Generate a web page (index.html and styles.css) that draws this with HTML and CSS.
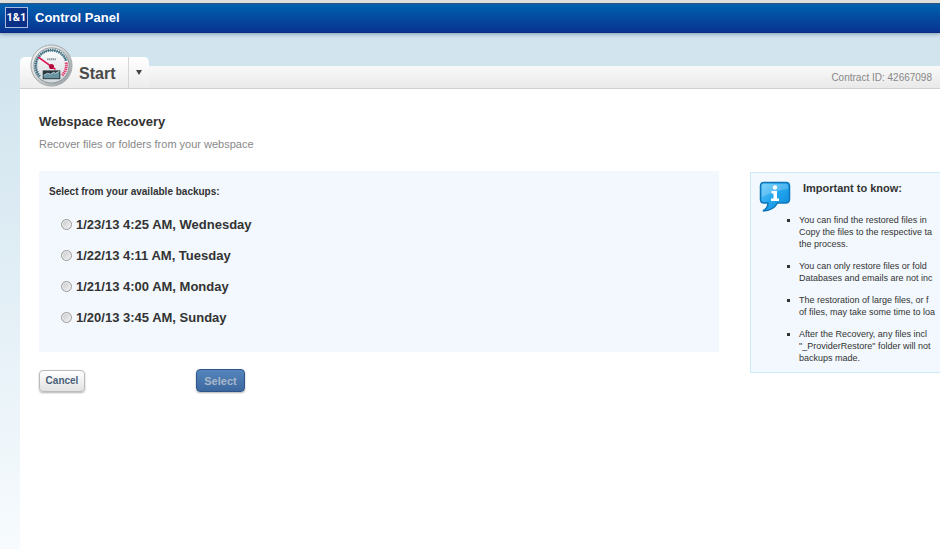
FILE: index.html
```html
<!DOCTYPE html>
<html lang="en">
<head>
    <meta charset="utf-8">
    <title>1&amp;1 Control Panel - Webspace Recovery</title>
    <meta name="viewport" content="width=device-width, initial-scale=1.0">
    <link rel="stylesheet" href="styles.css">
</head>
<body>
    <header class="topbar">
        <span class="logo">1&amp;1</span>
        <span class="topbar-title">Control Panel</span>
    </header>

    <div class="page">
        <nav class="tabs">
            <div class="tab">
                <svg class="gauge" viewBox="0 0 44 44" aria-hidden="true">
                    <defs>
                        <linearGradient id="rim" x1="0" y1="0" x2="1" y2="1">
                            <stop offset="0" stop-color="#ffffff"/>
                            <stop offset="0.5" stop-color="#ccd1d3"/>
                            <stop offset="1" stop-color="#8f969a"/>
                        </linearGradient>
                        <linearGradient id="face" x1="0" y1="0" x2="0" y2="1">
                            <stop offset="0" stop-color="#ffffff"/>
                            <stop offset="1" stop-color="#d3dadd"/>
                        </linearGradient>
                    </defs>
                    <circle cx="22" cy="22" r="21" fill="url(#rim)" stroke="#a3a8aa" stroke-width="1"/>
                    <circle cx="22" cy="22" r="18" fill="url(#face)" stroke="#8b9599" stroke-width="1"/>
                    <path d="M10 33A16 16 0 1 1 37 17" fill="none" stroke="#38738a" stroke-width="3" stroke-dasharray="1.2 1"/>
                    <path d="M10 33A16 16 0 1 1 37 17" fill="none" stroke="#456875" stroke-width="1"/>
                    <path d="M37 19A15 15 0 0 1 33 32" fill="none" stroke="#e5326b" stroke-width="3" stroke-dasharray="1.3 0.8"/>
                    <path d="M17.500 15.500h9" stroke="#8a979d" stroke-width="2" stroke-dasharray="1.500 0.500"/>
                    <rect x="13" y="27" width="18" height="9" fill="#2a363c"/>
                    <path d="M14 35v-3l4-2 3 1 3-2 2 1 4-2v7z" fill="#6b94a3"/>
                    <path d="M14 32l4-2 3 1 3-2 2 1 4-2" fill="none" stroke="#b8d2dc" stroke-width="1"/>
                    <path d="M8.500 13.500L26 26" stroke="#dc0d50" stroke-width="1.700"/>
                    <circle cx="22" cy="23" r="2.600" fill="#b30b3d"/>
                </svg>
                <a class="tab-link" href="#">Start</a>
                <button class="tab-menu" type="button" aria-label="Open menu"><svg viewBox="0 0 6 5" aria-hidden="true"><path d="M0 0h6L3 5z" fill="#444"/></svg></button>
            </div>
            <div class="tab-line">Contract ID: 42667098</div>
        </nav>

        <main class="content">
            <h1>Webspace Recovery</h1>
            <p class="intro">Recover files or folders from your webspace</p>

            <div class="columns">
                <form class="recovery">
                    <fieldset class="backups">
                        <legend>Select from your available backups:</legend>
                        <label class="backup"><input type="radio" name="backup">1/23/13 4:25 AM, Wednesday</label>
                        <label class="backup"><input type="radio" name="backup">1/22/13 4:11 AM, Tuesday</label>
                        <label class="backup"><input type="radio" name="backup">1/21/13 4:00 AM, Monday</label>
                        <label class="backup"><input type="radio" name="backup">1/20/13 3:45 AM, Sunday</label>
                    </fieldset>
                    <div class="actions">
                        <button class="btn" type="button">Cancel</button>
                        <button class="btn btn-primary" type="submit">Select</button>
                    </div>
                </form>

                <aside class="info">
                    <div class="info-head">
                        <svg class="info-icon" viewBox="0 0 32 32" aria-hidden="true">
                            <defs>
                                <linearGradient id="bubble" x1="0" y1="0" x2="1" y2="1">
                                    <stop offset="0" stop-color="#62c9f8"/>
                                    <stop offset="0.5" stop-color="#22a5ee"/>
                                    <stop offset="1" stop-color="#0c86d8"/>
                                </linearGradient>
                            </defs>
                            <path d="M5 2.500h22q3.500 0 3.500 3.500v13q0 4-4 4h-8q-4 7.500-14.500 8q5-3 5-8H5q-3.500 0-3.500-3.500V6q0-3.500 3.500-3.500z" fill="url(#bubble)" stroke="#0f75b8" stroke-width="1.500"/>
                            <path d="M3 6q0-2 2-2h22q2 0 2 2v3q-12 1-26 8z" fill="#fff" opacity="0.200"/>
                            <circle cx="16" cy="7.500" r="2.200" fill="#fff"/>
                            <path d="M12.500 11H18v7.500h2v2.500h-8v-2.500h2.500v-5h-2z" fill="#fff"/>
                        </svg>
                        <h2>Important to know:</h2>
                    </div>
                    <ul>
                        <li>You can find the restored files in<br>Copy the files to the respective ta<br>the process.</li>
                        <li>You can only restore files or fold<br>Databases and emails are not inc</li>
                        <li>The restoration of large files, or f<br>of files, may take some time to loa</li>
                        <li>After the Recovery, any files incl<br>"_ProviderRestore" folder will not<br>backups made.</li>
                    </ul>
                </aside>
            </div>
        </main>
    </div>
</body>
</html>
```
FILE: styles.css
```css
* {
    box-sizing: border-box;
}
body {
    margin: 0;
    min-height: 100vh;
    display: flex;
    flex-direction: column;
    font-family: "Liberation Sans", Arial, sans-serif;
    color: #333;
    background: linear-gradient(#cfe3ee, #d2e5ef 15%, #f7fbfe);
}
.topbar {
    display: flex;
    align-items: center;
    gap: 7px;
    height: 33px;
    padding: 0 5px;
    border-top: 3px solid #dfdfdb;
    border-bottom: 1px solid #0b2c80;
    background: linear-gradient(#0063b1, #083490);
    box-shadow: inset 0 1px 0 #35577a, 0 1px 4px rgba(0,40,90,0.4);
    color: white;
    font-weight: bold;
}
.logo {
    width: 23px;
    height: 21px;
    border: 1px solid #a9bce0;
    background: #0a2f87;
    font-family: Roboto, sans-serif;
    font-size: 11px;
    line-height: 19px;
    text-align: center;
}
.topbar-title {
    font-size: 13px;
}
.page {
    flex: 1;
    display: flex;
    flex-direction: column;
    margin-left: 20px;
    padding-top: 24px;
}
.tabs {
    display: flex;
    align-items: flex-end;
}
.tab {
    position: relative;
    display: flex;
    height: 32px;
    padding-left: 59px;
    border-bottom: 1px solid #d0d0d0;
    border-radius: 5px 5px 0 0;
    background: linear-gradient(#fff, #ececec);
}
.gauge {
    position: absolute;
    left: 10px;
    top: -13px;
    width: 43px;
    height: 43px;
}
.tab-link {
    width: 49px;
    color: #4a4a4a;
    font-size: 16px;
    font-weight: bold;
    line-height: 33px;
    text-decoration: none;
}
.tab-menu {
    width: 21px;
    padding: 0;
    border: 0;
    border-left: 1px solid #d5d5d5;
    background: none;
    line-height: 0;
    cursor: pointer;
}
.tab-menu svg {
    width: 6px;
    height: 5px;
}
.tab-line {
    flex: 1;
    height: 23px;
    padding-right: 8px;
    border-bottom: 1px solid #d0d0d0;
    background: linear-gradient(#f9f9f9, #e9e9e9);
    color: #888;
    font-size: 10px;
    line-height: 23px;
    text-align: right;
}
.content {
    flex: 1;
    padding: 25px 0 20px 19px;
    background: white;
}
h1 {
    margin: 0 0 6px;
    font-size: 13px;
    line-height: 16px;
}
.intro {
    margin: 0 0 19px;
    color: #888;
    font-size: 11px;
    line-height: 16px;
}
.columns {
    display: grid;
    grid-template-columns: minmax(0, 1fr) 190px;
    gap: 31px;
    align-items: start;
}
.backups {
    margin: 0;
    padding: 13px 10px 19px;
    border: 0;
    background: #f2f8fd;
}
legend {
    float: left;
    width: 100%;
    margin-bottom: 9px;
    padding: 0;
    font-size: 10px;
    font-weight: bold;
    line-height: 16px;
}
.backup {
    clear: both;
    display: flex;
    align-items: center;
    gap: 4px;
    height: 31px;
    padding-left: 12px;
    font-size: 13px;
    font-weight: bold;
}
.backup input {
    appearance: none;
    width: 11px;
    height: 11px;
    margin: 0;
    border: 1px solid #999;
    border-radius: 50%;
    background: linear-gradient(135deg, #c8c8c8, #f4f4f4);
    box-shadow: inset 0 0 0 1px #eee;
}
.backup input:checked {
    background: #456;
}
.actions {
    display: flex;
    align-items: center;
    gap: 111px;
    margin-top: 17px;
}
.btn {
    width: 46px;
    height: 22px;
    padding: 0;
    border: 1px solid #bbb;
    border-radius: 4px;
    background: linear-gradient(#fff, #e2e2e2);
    box-shadow: 0 1px 2px rgba(0,0,0,0.3);
    color: #4a6079;
    font-family: inherit;
    font-size: 10px;
    font-weight: bold;
    cursor: pointer;
}
.btn-primary {
    width: 49px;
    height: 23px;
    border-color: #2f5588;
    background: linear-gradient(#5585bd, #3c689f);
    color: #a9b8c9;
    font-size: 11px;
}
.info {
    margin-top: 1px;
    padding: 7px 0 8px 8px;
    border: 1px solid #cdeafa;
    border-right: 0;
    background: #f2f8fd;
    overflow: hidden;
    white-space: nowrap;
}
.info-head {
    display: flex;
    gap: 12px;
}
.info-icon {
    width: 32px;
    height: 32px;
}
h2 {
    margin: 0;
    font-size: 11px;
    line-height: 16px;
}
.info ul {
    margin: 0;
    padding: 2px 0 0 40px;
    list-style: square;
    font-size: 9px;
    line-height: 12px;
}
.info li + li {
    margin-top: 10px;
}
```
